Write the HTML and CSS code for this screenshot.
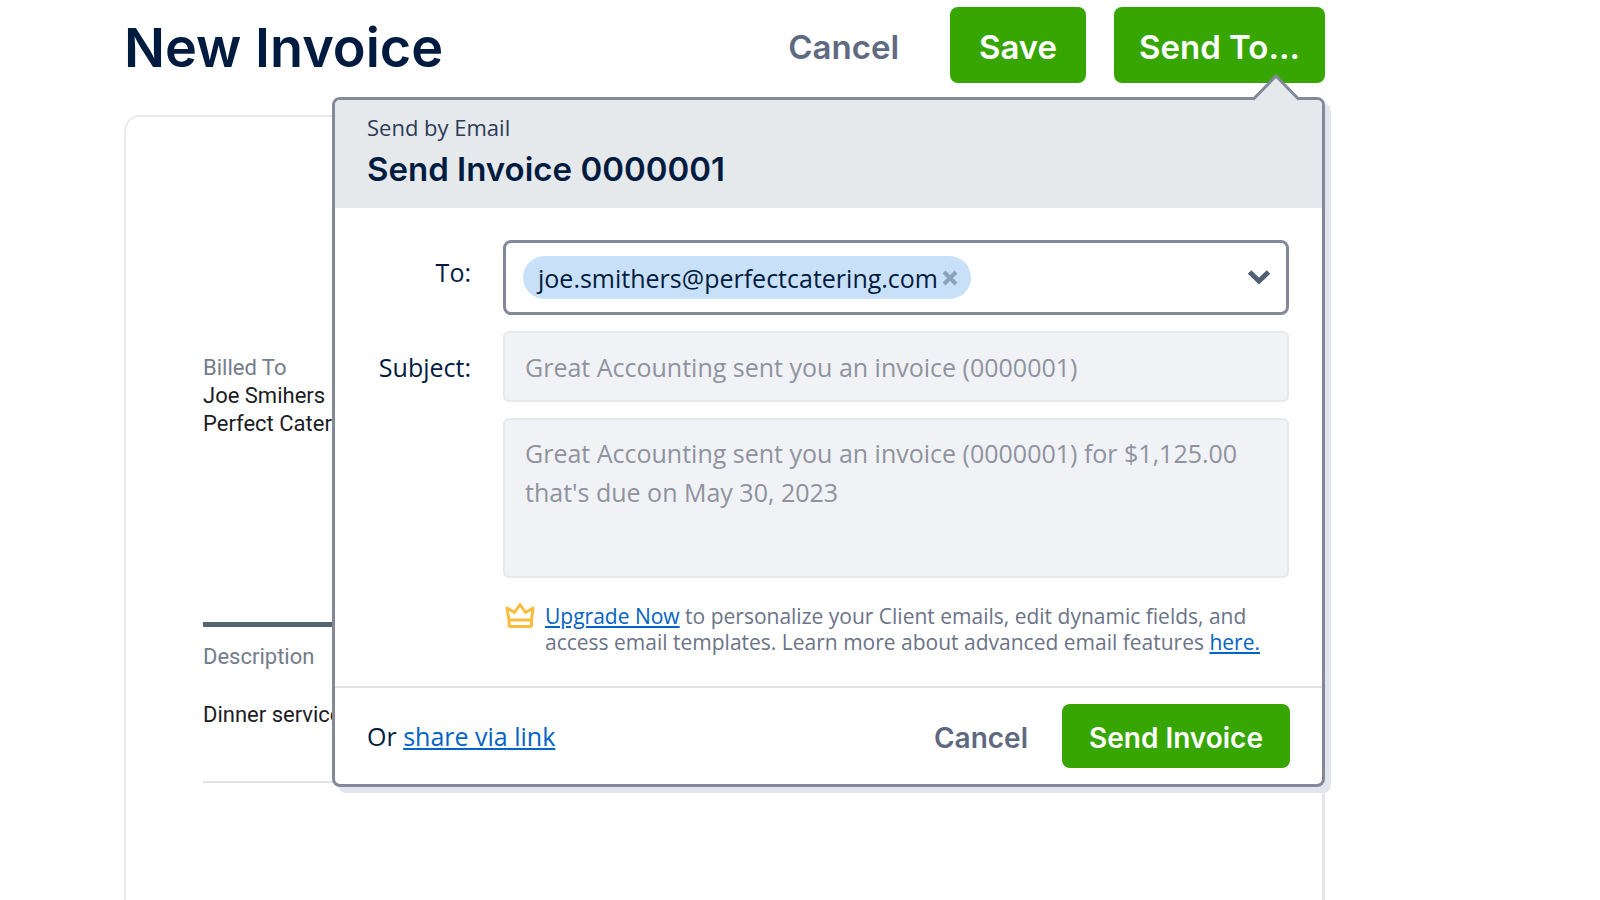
FILE: index.html
```html
<!DOCTYPE html>
<html lang="en">
<head>
<meta charset="utf-8">
<title>New Invoice</title>
<meta name="viewport" content="width=device-width, initial-scale=1">
<link rel="stylesheet" href="styles.css">
</head>
<body>
<div class="page">
  <header class="topbar">
    <h1 class="page-title">New Invoice</h1>
    <div class="actions">
      <button type="button" class="btn-text btn-text-large">Cancel</button>
      <button type="button" class="btn btn-large">Save</button>
      <button type="button" class="btn btn-large" aria-expanded="true">Send To...</button>
    </div>
  </header>

  <main class="invoice">
    <section class="billed">
      <h2 class="muted">Billed To</h2>
      <p>Joe Smihers</p>
      <p>Perfect Catering</p>
    </section>
    <table class="items">
      <thead><tr><th scope="col">Description</th></tr></thead>
      <tbody><tr><td>Dinner services</td></tr></tbody>
    </table>
  </main>

  <form class="popover" role="dialog" aria-labelledby="popover-title">
    <svg class="pointer" viewBox="0 0 48 27" aria-hidden="true">
      <path class="pointer-fill" d="M0 27V25L2 24L24 2L46 24L48 25V27Z"/>
      <path class="pointer-line" d="M0 24.5H2L24 2L46 24.5H48"/>
    </svg>
    <div class="popover-head">
      <p class="kicker">Send by Email</p>
      <h2 class="popover-title" id="popover-title">Send Invoice 0000001</h2>
    </div>
    <div class="popover-body">
      <span class="label" id="to-label">To:</span>
      <div class="recipients" role="group" aria-labelledby="to-label">
        <span class="chip">joe.smithers@perfectcatering.com
          <button type="button" class="icon-btn" aria-label="Remove recipient">
            <svg class="icon-x" viewBox="0 0 16 16" aria-hidden="true"><path d="M2 2L14 14M14 2L2 14"/></svg>
          </button>
        </span>
        <button type="button" class="icon-btn" aria-label="Show clients">
          <svg class="icon-chevron" viewBox="0 0 24 18" aria-hidden="true"><path d="M2.500 3L12 12L21.500 3"/></svg>
        </button>
      </div>
      <label class="label label-subject" for="subject">Subject:</label>
      <input class="field" id="subject" type="text" value="Great Accounting sent you an invoice (0000001)" readonly>
      <textarea class="field message" aria-label="Message" readonly>Great Accounting sent you an invoice (0000001) for $1,125.00 that's due on May 30, 2023</textarea>
      <div class="upgrade">
        <svg class="crown" viewBox="0 0 30 26" aria-hidden="true">
          <path d="M4 17L2 5L9.500 9.500L15 1.500L20.500 9.500L28 5L26.500 17ZM4 17V22Q4 23.500 5.500 23.500H25Q26.500 23.500 26.500 22V17"/>
        </svg>
        <p><a href="#upgrade">Upgrade Now</a> to personalize your Client emails, edit dynamic fields, and access email templates. Learn more about advanced email features <a href="#learn">here.</a></p>
      </div>
    </div>
    <div class="popover-foot">
      <p class="share">Or <a href="#share">share via link</a></p>
      <button type="button" class="btn-text">Cancel</button>
      <button type="submit" class="btn">Send Invoice</button>
    </div>
  </form>
</div>
</body>
</html>
```
FILE: styles.css
```css
* {
  box-sizing: border-box;
}

body {
  margin: 0;
  background: #fff;
  color: #001b40;
  font-family: "Open Sans", "Liberation Sans", sans-serif;
  font-size: 25px;
}

h1, h2, p {
  margin: 0;
}

a {
  color: #0063c6;
  text-decoration-thickness: 2px;
  text-underline-offset: 2px;
}

button, input, textarea {
  font: inherit;
}

button {
  border: 0;
  cursor: pointer;
}

.page {
  position: relative;
  display: flex;
  flex-direction: column;
  height: 100vh;
  min-height: 800px;
  margin: 0 275px 0 124px;
}

.topbar {
  display: flex;
  flex: none;
  align-items: center;
  justify-content: space-between;
  height: 115px;
  padding-bottom: 25px;
}

.page-title {
  padding-top: 6px;
  font-family: Inter, sans-serif;
  font-size: 54px;
  font-weight: 600;
  line-height: 64px;
}

.actions {
  display: flex;
  align-items: center;
  gap: 28px;
}

.btn, .btn-text {
  font-family: Inter, sans-serif;
  font-size: 28px;
  font-weight: 600;
}

.btn {
  height: 64px;
  padding: 4px 27px 0;
  border-radius: 8px;
  background: #37a603;
  color: #fff;
}

.btn-text {
  padding: 4px 0 0;
  background: none;
  color: #5f6a82;
}

.btn-large, .btn-text-large {
  font-size: 33px;
}

.btn-large {
  min-width: 136px;
  height: 76px;
  padding: 4px 25px 0;
}

.btn-text-large {
  margin-right: 23px;
}

.invoice {
  flex: 1;
  padding: 237px 77px 0;
  border: 2px solid #ece9ee;
  border-right: 3px solid #e6e6ea;
  border-bottom: 0;
  border-radius: 16px 16px 0 0;
  color: #1c1c24;
  font-family: Roboto, sans-serif;
  font-size: 22px;
  line-height: 28px;
}

.muted, .items th {
  color: #737d8b;
  font-size: 22px;
  font-weight: 400;
}

.items {
  width: 100%;
  margin-top: 184px;
  border-top: 5px solid #536472;
  border-bottom: 2px solid #e3e3e8;
  border-spacing: 0;
  text-align: left;
}

.items th {
  padding: 16px 0 14px;
}

.items td {
  padding: 16px 0 52px;
}

.popover {
  position: absolute;
  top: 97px;
  right: 0;
  left: 208px;
  border: 3px solid #83889a;
  border-radius: 8px;
  background: #fff;
  box-shadow: 6px 6px 0 #e1e5ed;
}

.pointer {
  position: absolute;
  top: -26px;
  right: 22px;
  width: 48px;
  height: 27px;
}

.pointer-fill {
  fill: #e6e9ec;
}

.pointer-line {
  fill: none;
  stroke: #83889a;
  stroke-width: 3;
}

.popover-head {
  padding: 9px 32px 17px;
  border-radius: 5px 5px 0 0;
  background: #e6e9ec;
}

.kicker {
  margin-bottom: 2px;
  color: #2c3b58;
  font-size: 22px;
  line-height: 36px;
}

.popover-title {
  font-family: Inter, sans-serif;
  font-size: 33px;
  font-weight: 600;
  line-height: 44px;
}

.popover-body {
  display: grid;
  grid-template-columns: 104px 1fr;
  gap: 16px 32px;
  padding: 32px 33px 31px 32px;
}

.label {
  padding-top: 14px;
  line-height: 36px;
  text-align: right;
}

.label-subject {
  padding-top: 18px;
}

.recipients {
  display: flex;
  align-items: center;
  justify-content: space-between;
  height: 75px;
  padding: 0 15px 0 17px;
  border: 3px solid #83889a;
  border-radius: 8px;
}

.chip {
  display: flex;
  align-items: center;
  gap: 4px;
  height: 43px;
  padding: 0 13px 0 15px;
  border-radius: 22px;
  background: #c9e1f8;
}

.icon-btn {
  display: flex;
  padding: 0;
  background: none;
}

.icon-x {
  width: 16px;
  height: 16px;
  fill: none;
  stroke: #8aa3bb;
  stroke-width: 4;
}

.icon-chevron {
  width: 24px;
  height: 18px;
  fill: none;
  stroke: #4f6074;
  stroke-width: 5;
}

.field {
  width: 100%;
  height: 71px;
  padding: 0 20px;
  border: 2px solid #e6e8ec;
  border-radius: 6px;
  background: #f1f2f5;
  color: #8f939f;
  outline: 0;
}

.message {
  grid-column: 2;
  height: 160px;
  padding-top: 14px;
  line-height: 39px;
  resize: none;
}

.upgrade {
  display: flex;
  grid-column: 2;
  gap: 10px;
  padding: 9px 0 0 2px;
  color: #6b7388;
  font-size: 21px;
  line-height: 26px;
}

.crown {
  flex: none;
  width: 30px;
  height: 26px;
  fill: none;
  stroke: #f8bd3f;
  stroke-width: 3;
  stroke-linejoin: round;
}

.popover-foot {
  display: flex;
  align-items: center;
  gap: 34px;
  padding: 16px 32px;
  border-top: 2px solid #dfe1e7;
}

.share {
  flex: 1;
}
```
